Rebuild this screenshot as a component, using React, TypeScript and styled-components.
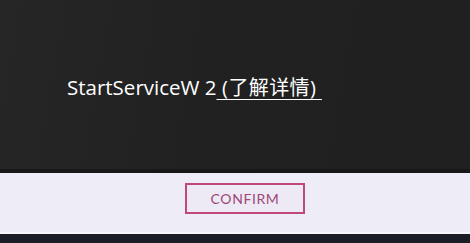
import React from 'react'
import styled, { createGlobalStyle } from 'styled-components'

const GlobalStyle = createGlobalStyle`
  html, body {
    margin: 0;
    padding: 0;
    background: #1c1e27;
  }
  #root {
    width: 470px;
    height: 243px;
  }
`

const Screen = styled.div`
  width: 470px;
  height: 243px;
  display: flex;
  flex-direction: column;
  font-family: "Open Sans", "Noto Sans CJK SC", sans-serif;
`

const Message = styled.div`
  height: 173px;
  flex-shrink: 0;
  box-sizing: border-box;
  padding: 72px 0 0 67px;
  background: linear-gradient(100deg, #262626 0%, #212121 45%, #202020 100%);
  border-bottom: 4px solid #181818;
  color: #ffffff;
  font-size: 20.5px;
  line-height: 30px;
  white-space: nowrap;
`

const MoreLink = styled.a`
  color: #ffffff;
  text-decoration: underline;
  text-underline-offset: 4px;
  text-decoration-thickness: 1px;
  font-size: 20px;
  letter-spacing: 0.4px;
`

const Footer = styled.div`
  height: 61px;
  flex-shrink: 0;
  background: #eeecf7;
  border-bottom: 2px solid #f7f7fb;
  display: flex;
  justify-content: center;
  align-items: flex-start;
  padding: 10px 0 0 20px;
  box-sizing: border-box;
`

const ConfirmButton = styled.button`
  width: 120px;
  height: 31px;
  box-sizing: border-box;
  border: 2px solid #c0487a;
  background: #ede9f5;
  color: #9e4877;
  font-family: "Lato", "Liberation Sans", sans-serif;
  font-size: 14px;
  letter-spacing: 0.6px;
  padding: 0;
  cursor: pointer;
`

const BottomStrip = styled.div`
  flex: 1;
  background: #1c1e27;
`

export default function App() {
  return (
    <>
      <GlobalStyle />
      <Screen>
        <Message>
          StartServiceW 2<MoreLink href="#">&nbsp;(了解详情)&nbsp;</MoreLink>
        </Message>
        <Footer>
          <ConfirmButton>CONFIRM</ConfirmButton>
        </Footer>
        <BottomStrip />
      </Screen>
    </>
  )
}
